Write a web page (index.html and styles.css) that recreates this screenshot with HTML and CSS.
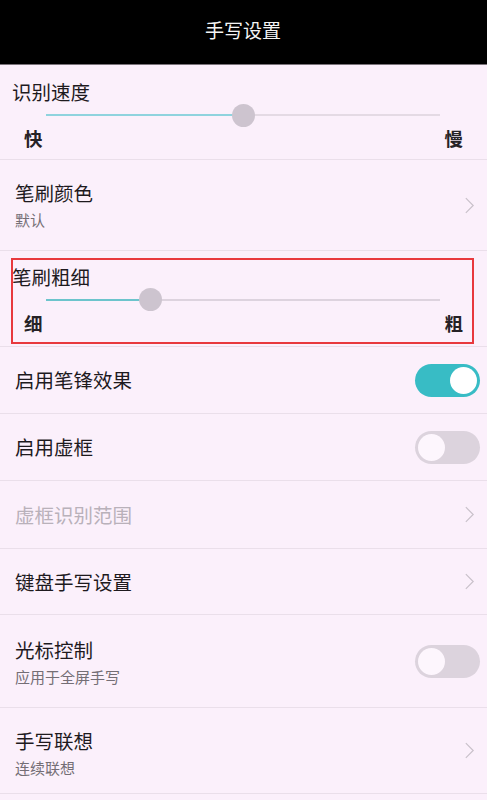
FILE: index.html
```html
<!DOCTYPE html>
<html lang="zh">
<head>
<meta charset="utf-8">
<title>手写设置</title>
<link rel="stylesheet" href="styles.css">
</head>
<body>
<div class="app">
  <header class="topbar"><span class="topbar-title">手写设置</span></header>

  <section class="slider-row row-speed">
    <div class="slider-title">识别速度</div>
    <div class="slider">
      <div class="track"><div class="fill fill-speed"></div><div class="thumb thumb-speed"></div></div>
    </div>
    <div class="slider-labels"><span>快</span><span>慢</span></div>
  </section>

  <section class="item item-color">
    <div class="text text-top21">
      <div class="title">笔刷颜色</div>
      <div class="sub">默认</div>
    </div>
    <svg class="chev" viewBox="0 0 12 18"><path d="M2 1 L10 9 L2 17" /></svg>
  </section>

  <section class="slider-row row-width">
    <div class="slider-title">笔刷粗细</div>
    <div class="slider">
      <div class="track thin"><div class="fill fill-width"></div><div class="thumb thumb-width"></div></div>
    </div>
    <div class="slider-labels"><span>细</span><span>粗</span></div>
    <div class="highlight"></div>
  </section>

  <section class="item item-h67">
    <div class="title">启用笔锋效果</div>
    <div class="switch on"><div class="knob"></div></div>
  </section>

  <section class="item item-h67">
    <div class="title">启用虚框</div>
    <div class="switch"><div class="knob"></div></div>
  </section>

  <section class="item item-h68">
    <div class="title disabled">虚框识别范围</div>
    <svg class="chev" viewBox="0 0 12 18"><path d="M2 1 L10 9 L2 17" /></svg>
  </section>

  <section class="item item-h66">
    <div class="title">键盘手写设置</div>
    <svg class="chev" viewBox="0 0 12 18"><path d="M2 1 L10 9 L2 17" /></svg>
  </section>

  <section class="item item-cursor">
    <div class="text text-top23">
      <div class="title">光标控制</div>
      <div class="sub">应用于全屏手写</div>
    </div>
    <div class="switch"><div class="knob"></div></div>
  </section>

  <section class="item item-assoc">
    <div class="text text-top21">
      <div class="title">手写联想</div>
      <div class="sub">连续联想</div>
    </div>
    <svg class="chev" viewBox="0 0 12 18"><path d="M2 1 L10 9 L2 17" /></svg>
  </section>
</div>
</body>
</html>
```

FILE: styles.css
```css
* { box-sizing: border-box; }
html, body {
  margin: 0;
  padding: 0;
  background: #fbf0fb;
}
body {
  font-family: "Noto Sans CJK SC", "Noto Sans", sans-serif;
  color: #1e1a1e;
  width: 487px;
  height: 800px;
  overflow: hidden;
}
.app {
  display: flex;
  flex-direction: column;
}
.topbar {
  height: 65px;
  background: #000;
  border-bottom: 1px solid #7a737a;
  display: flex;
  align-items: center;
  justify-content: center;
  padding-bottom: 4px;
}
.topbar-title {
  color: #f4f4f4;
  font-size: 19px;
  line-height: 24px;
  margin-left: -1px;
}

/* slider rows */
.slider-row {
  position: relative;
  border-bottom: 1px solid #eadfea;
  display: flex;
  flex-direction: column;
}
.row-speed { height: 95px; padding-top: 15px; }
.row-width { height: 96px; padding-top: 14px; }
.slider-title {
  font-size: 19.5px;
  line-height: 24px;
  padding-left: 12px;
}
.slider {
  height: 22px;
  display: flex;
  align-items: center;
  padding-left: 46px;
  padding-right: 47px;
}
.track {
  position: relative;
  flex: 1;
  height: 2px;
  background: #e4dae4;
}
.track.thin { background: #ddd3de; }
.fill {
  position: absolute;
  left: 0;
  top: 0;
  height: 2px;
  background: #8fd3de;
}
.fill-speed { width: 197px; }
.fill-width { width: 104px; background: #6cc4cc; }
.thumb {
  position: absolute;
  top: -11px;
  width: 23px;
  height: 23px;
  margin-left: -11.5px;
  border-radius: 50%;
  background: #cdc4cf;
}
.thumb-speed { left: 197px; top: -10.5px; }
.thumb-width { left: 104px; }
.slider-labels {
  display: flex;
  justify-content: space-between;
  padding: 0 24px;
  font-size: 18.5px;
  line-height: 24px;
  font-weight: 700;
  color: #262226;
}
.highlight {
  position: absolute;
  left: 11px;
  top: 7px;
  width: 463px;
  height: 86px;
  border: 2px solid #e8393d;
}

/* list items */
.item {
  display: flex;
  align-items: center;
  justify-content: space-between;
  border-bottom: 1px solid #eadfea;
  padding-left: 15px;
  padding-right: 7px;
}
.item-color { height: 91px; padding-right: 12px; }
.item-h67 { height: 67px; }
.item-h68 { height: 68px; padding-right: 12px; }
.item-h66 { height: 66px; padding-right: 12px; }
.item-cursor { height: 93px; }
.item-assoc { height: 86px; padding-right: 12px; }
.text {
  align-self: flex-start;
  display: flex;
  flex-direction: column;
}
.text-top21 { padding-top: 21px; }
.text-top23 { padding-top: 23px; }
.title {
  font-size: 19.5px;
  line-height: 24px;
}
.title.disabled { color: #b9b1ba; }
.sub {
  margin-top: 5px;
  font-size: 15px;
  line-height: 20px;
  color: #746e75;
}
.chev {
  width: 11px;
  height: 17px;
  fill: none;
  stroke: #c9c1ca;
  stroke-width: 1.3;
}
.switch {
  position: relative;
  width: 65px;
  height: 33px;
  border-radius: 17px;
  background: #dcd3dd;
}
.switch.on { background: #38bcc5; }
.knob {
  position: absolute;
  top: 3px;
  left: 3px;
  width: 27px;
  height: 27px;
  border-radius: 50%;
  background: #fdf6fd;
}
.switch.on .knob { left: 35px; background: #ffffff; }
```
